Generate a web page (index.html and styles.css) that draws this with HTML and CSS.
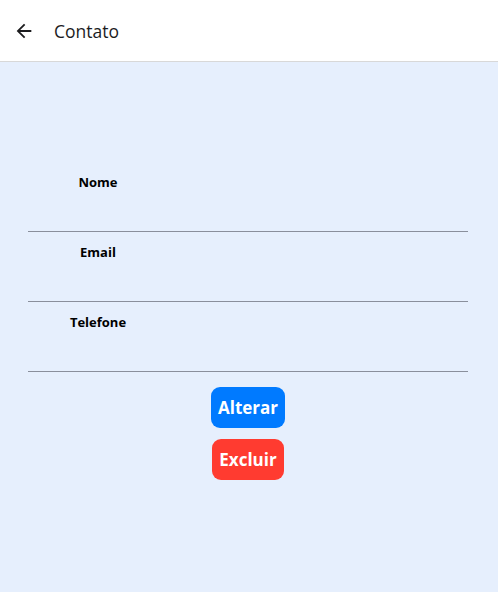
FILE: index.html
```html
<!DOCTYPE html>
<html lang="pt">
<head>
<meta charset="utf-8">
<title>Contato</title>
<link rel="stylesheet" href="styles.css">
</head>
<body>
<header class="header">
  <button class="back" aria-label="Voltar">
    <svg width="22" height="22" viewBox="0 0 24 24"><path d="M20 11H7.83l5.59-5.59L12 4l-8 8 8 8 1.41-1.41L7.83 13H20v-2z" fill="#1c1c1e"/></svg>
  </button>
  <h1 class="title">Contato</h1>
</header>
<main class="content">
  <div class="form">
    <div class="field"><span class="label">Nome</span></div>
    <div class="field"><span class="label">Email</span></div>
    <div class="field"><span class="label">Telefone</span></div>
  </div>
  <div class="actions">
    <button class="btn btn-blue">Alterar</button>
    <button class="btn btn-red">Excluir</button>
  </div>
</main>
</body>
</html>
```
FILE: styles.css
```css
* { box-sizing: border-box; }
html, body { margin: 0; padding: 0; height: 100%; }
body {
  font-family: "Open Sans", "Noto Sans", sans-serif;
  background: #e6effd;
  color: #000;
}
.header {
  height: 62px;
  background: #fff;
  border-bottom: 1px solid #d8d8d8;
  display: flex;
  align-items: center;
  padding-left: 12px;
}
.back {
  border: 0;
  background: none;
  padding: 0;
  width: 24px;
  height: 24px;
  display: flex;
  align-items: center;
  justify-content: center;
}
.title {
  margin: 0 0 0 18px;
  font-size: 17.5px;
  font-weight: 500;
  color: #1c1c1e;
}
.content {
  padding: 100px 30px 0 28px;
}
.form { display: flex; flex-direction: column; }
.field {
  height: 70px;
  border-bottom: 1px solid #8a8f9c;
  padding-top: 11px;
}
.label {
  display: block;
  width: 140px;
  text-align: center;
  font-size: 13px;
  font-weight: 700;
}
.actions {
  display: flex;
  flex-direction: column;
  align-items: center;
  gap: 11px;
  padding-top: 15px;
}
.btn {
  border: 0;
  border-radius: 9px;
  height: 41px;
  padding: 0 7px;
  color: #fff;
  font-family: inherit;
  font-size: 17px;
  font-weight: 700;
}
.btn-blue { background: #007aff; }
.btn-red { background: #ff3b30; }
```
